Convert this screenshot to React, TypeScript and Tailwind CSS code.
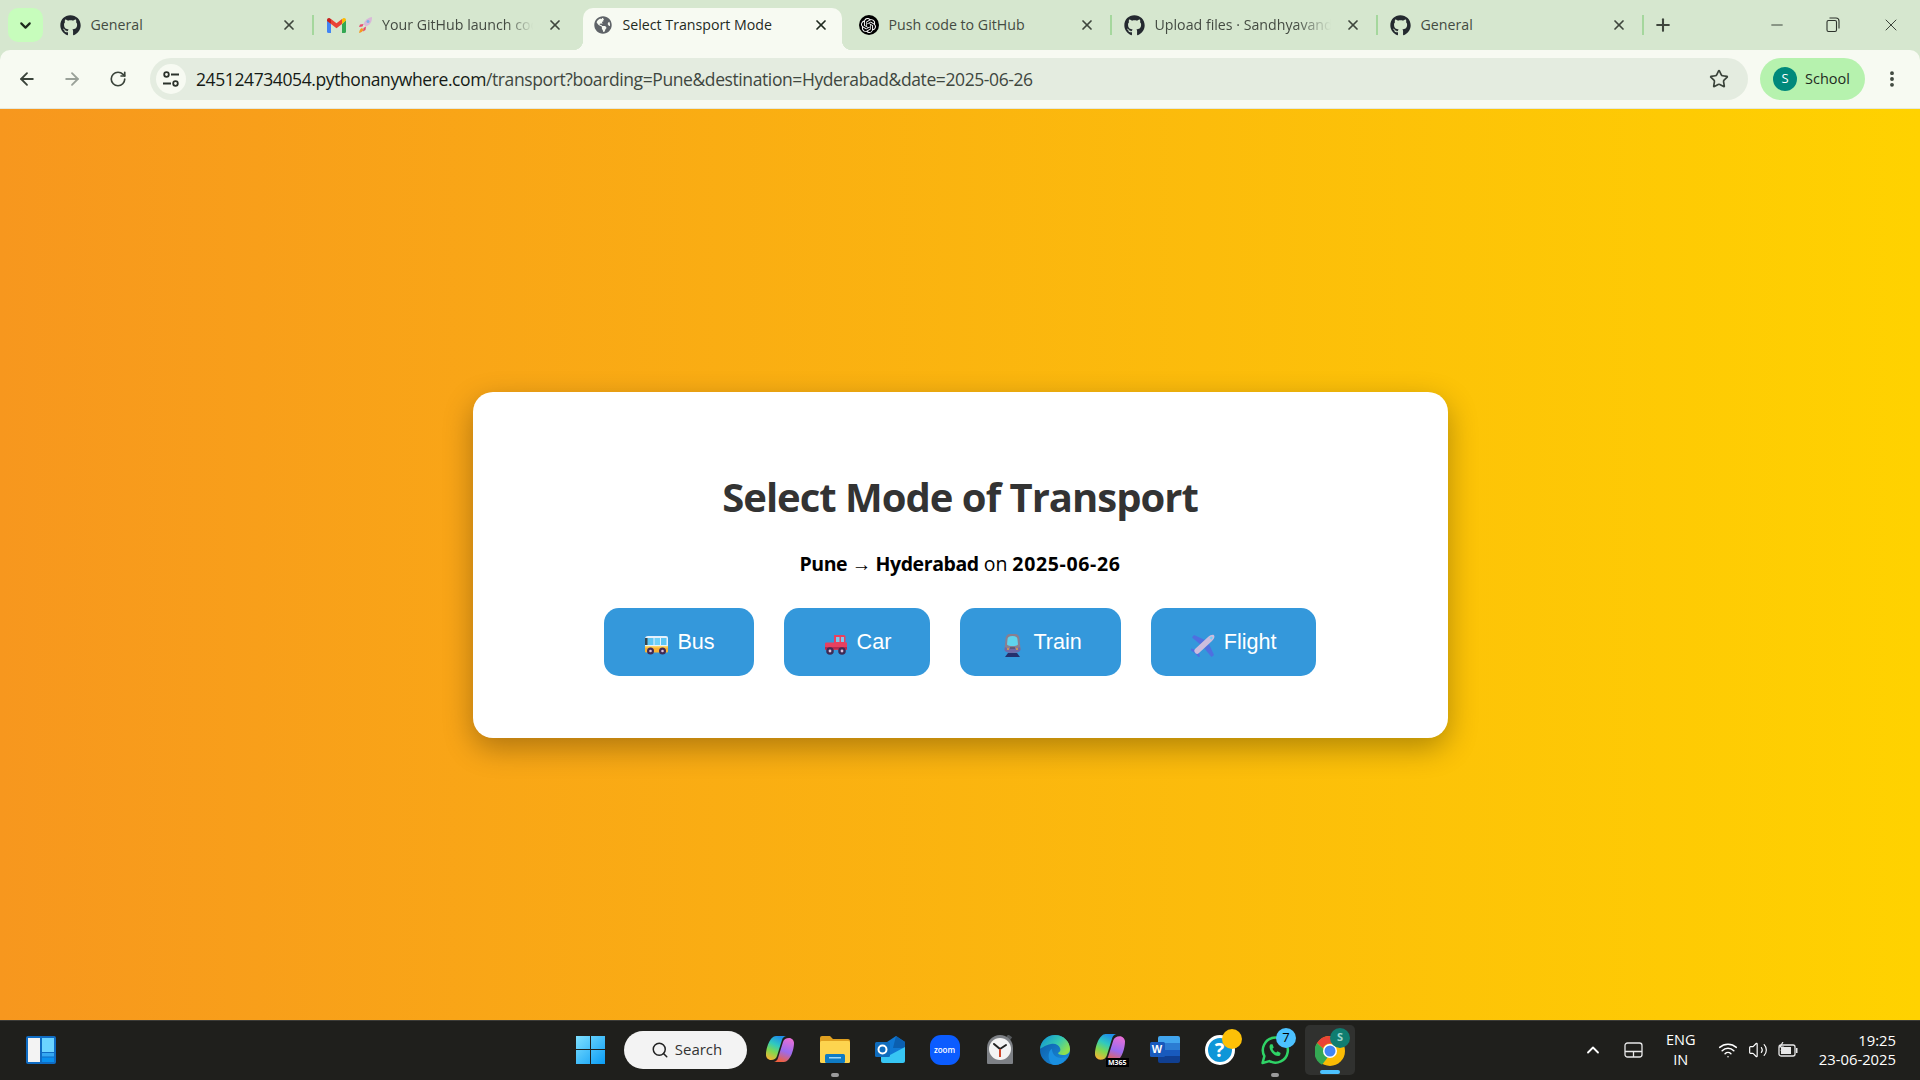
import { ArrowLeft, ArrowRight, ChevronDown, ChevronUp, EllipsisVertical, Minus, Plus, RotateCw, Search, Star, Volume2, Wifi, X } from "lucide-react"
import { FaGithub, FaGlobeAmericas } from "react-icons/fa"
import { SiOpenai } from "react-icons/si"
import type { ReactNode } from "react"

function GmailIcon() {
  return (
    <svg width="19" height="15" viewBox="0 0 19 15">
      <path d="M0 2v11.5A1.5 1.5 0 0 0 1.5 15H4V6z" fill="#4285f4" />
      <path d="M15 6v9h2.5a1.5 1.5 0 0 0 1.5-1.5V2z" fill="#34a853" />
      <path d="M15 1v5l4-3.500V2c0-1.700-2-2.500-3-1.500z" fill="#fbbc04" />
      <path d="M4 6V1l5.500 4.200L15 1v5l-5.500 4.200z" fill="#ea4335" />
      <path d="M0 2v1l4 3V1L3 .5C2 -.5 0 .3 0 2z" fill="#c5221f" />
    </svg>
  )
}

function RocketIcon() {
  return (
    <svg width="15" height="18" viewBox="0 0 15 18">
      <path d="M14 1c-4 .5-7 3-8.500 7l2.500 2.500c4-1.500 6-4.500 6-9.500z" fill="#d9b8d8" />
      <circle cx="10" cy="5.500" r="1.500" fill="#7fb0e8" />
      <path d="M5.500 8 2 8.500 1 11l3.500-.5zM8 10.500 7.500 14 5 15.500l.5-3.500z" fill="#e8486f" />
      <path d="M4 12c-1.500.5-2.500 2-3 5 2.500-.5 4-1.500 4.500-3.500z" fill="#f59a23" />
    </svg>
  )
}

function Tab({ icon, title, active, fade, sep }: { icon: ReactNode; title: string; active?: boolean; fade?: boolean; sep?: boolean }) {
  return (
    <div className="relative flex h-[50px] w-[266px] shrink-0 items-center">
      {active && (
        <div className="absolute left-[3px] top-[8px] h-[42px] w-[259px] rounded-t-[10px] bg-[#f7faf2]">
          <div className="absolute bottom-0 left-[-10px] h-[10px] w-[10px] bg-[radial-gradient(circle_at_0_0,transparent_10px,#f7faf2_10.5px)]" />
          <div className="absolute bottom-0 right-[-10px] h-[10px] w-[10px] bg-[radial-gradient(circle_at_100%_0,transparent_10px,#f7faf2_10.5px)]" />
        </div>
      )}
      <div className="relative ml-[12.500px] flex h-[20px] w-[20px] items-center justify-center">{icon}</div>
      <div
        className={`relative ml-[10px] w-[176px] whitespace-nowrap text-[14.2px] ${active ? "text-[#1f2a1f]" : "text-[#444b42]"} ${fade ? "overflow-hidden [mask-image:linear-gradient(to_right,black_80%,transparent)]" : ""}`}
      >
        {title}
      </div>
      <X className={`absolute left-[233px] top-[17px] ${active ? "text-[#1f2a1f]" : "text-[#3f463d]"}`} size={16} strokeWidth={2.6} />
      {sep && <div className="absolute right-0 top-[15px] h-[20px] w-[2px] bg-[#a5d79d]" />}
    </div>
  )
}

function TabStrip() {
  const gh = <FaGithub size={21} className="shrink-0 text-[#24292f]" />
  return (
    <div className="flex h-[50px] items-start bg-[#d6e7cf]">
      <div className="ml-[8px] mr-[5px] mt-[8px] flex h-[34px] w-[35px] items-center justify-center rounded-[10px] bg-[#c7fdbc]">
        <ChevronDown size={17} strokeWidth={3} className="text-[#1c2a1c]" />
      </div>
      <Tab icon={gh} title="General" sep />
      <div className="relative flex h-[50px] w-[266px] shrink-0 items-center">
        <div className="ml-[13px]"><GmailIcon /></div>
        <div className="ml-[12px]"><RocketIcon /></div>
        <div className="ml-[9px] w-[151px] overflow-hidden whitespace-nowrap text-[14.2px] text-[#444b42] [mask-image:linear-gradient(to_right,black_82%,transparent)]">
          Your GitHub launch code
        </div>
        <X className="absolute left-[233px] top-[17px] text-[#3f463d]" size={16} strokeWidth={2.6} />
      </div>
      <Tab active icon={<FaGlobeAmericas size={18} className="text-[#5f6368]" />} title="Select Transport Mode" />
      <Tab
        icon={
          <div className="flex h-[20px] w-[20px] items-center justify-center rounded-full bg-black">
            <SiOpenai size={15} className="text-white" />
          </div>
        }
        title="Push code to GitHub"
        sep
      />
      <Tab icon={gh} title="Upload files · Sandhyavandana" fade sep />
      <Tab icon={gh} title="General" sep />
      <Plus size={20} strokeWidth={2.5} className="ml-[9px] mt-[15px] text-[#3f463d]" />
      <div className="ml-auto flex h-[50px]">
        <div className="flex w-[54px] items-center justify-center pb-[1px]"><Minus size={18} strokeWidth={1.2} className="text-[#2d332c]" /></div>
        <div className="flex w-[58px] items-center justify-center">
          <svg width="14" height="16" viewBox="0 0 14 16" fill="none" stroke="#2d332c" strokeWidth="1.1">
            <rect x="1" y="3.500" width="9.500" height="11" rx="1.500" />
            <path d="M3.500 1h6.500a3 3 0 0 1 3 3v7.500" />
          </svg>
        </div>
        <div className="flex w-[58px] items-center justify-center"><X size={20} strokeWidth={1.1} className="text-[#2d332c]" /></div>
      </div>
    </div>
  )
}

function TuneIcon() {
  return (
    <svg width="18" height="18" viewBox="0 0 18 18" fill="none" stroke="#2c332c" strokeWidth="1.800">
      <circle cx="4.500" cy="4.500" r="2.300" />
      <path d="M9 4.500h8M1 13.500h8" />
      <circle cx="13.500" cy="13.500" r="2.300" />
    </svg>
  )
}

function Toolbar() {
  return (
    <div className="bg-[#d6e7cf]">
      <div className="flex h-[59px] items-center rounded-t-[10px] border-b border-[#e3e8df] bg-[#f7faf2]">
        <div className="flex w-[150px] items-center pl-[17px]">
          <ArrowLeft size={20} strokeWidth={2.2} className="text-[#3a433a]" />
          <ArrowRight size={20} strokeWidth={2.2} className="ml-[25px] text-[#9aa199]" />
          <RotateCw size={18} strokeWidth={2.2} className="ml-[27px] text-[#3a433a]" />
        </div>
        <div className="flex h-[42px] w-[1598px] items-center rounded-full bg-[#e4ece0] pl-[6px] pr-[19px]">
          <div className="flex h-[30px] w-[30px] items-center justify-center rounded-full bg-[#f7faf2]"><TuneIcon /></div>
          <div className="ml-[10px] whitespace-nowrap text-[17.500px] tracking-[-0.4px] text-[#3f473f]">
            <span className="text-[#151a15]">245124734054.pythonanywhere.com</span>/transport?boarding=Pune&amp;destination=Hyderabad&amp;date=2025-06-26
          </div>
          <Star size={20} strokeWidth={2} className="ml-auto text-[#3a433a]" />
        </div>
        <div className="ml-[12px] flex h-[42px] w-[105px] items-center rounded-full bg-[#b6f2ae] pl-[13px]">
          <div className="flex h-[24px] w-[24px] items-center justify-center rounded-full bg-[#00897b] text-[13px] text-white">S</div>
          <span className="ml-[8px] text-[14.500px] text-[#1f2a1f]">School</span>
        </div>
        <EllipsisVertical size={20} strokeWidth={2.6} className="ml-[17px] text-[#3a433a]" />
      </div>
    </div>
  )
}

function BusEmoji() {
  return (
    <svg width="23" height="19" viewBox="0 0 23 19">
      <path d="M3 0h18a2 2 0 0 1 2 2v13H0V3a3 3 0 0 1 3-3z" fill="#e6f1fb" />
      <rect x="2" y="2" width="6.500" height="7" fill="#5cc6f5" />
      <rect x="9.500" y="2" width="5.500" height="7" fill="#6fd0f8" />
      <rect x="16" y="2" width="5.500" height="7" fill="#5cc6f5" />
      <rect x="0" y="2" width="2.500" height="7" fill="#37474f" />
      <rect x="0" y="10" width="23" height="6.500" rx="1" fill="#f9b233" />
      <rect x="0" y="10" width="23" height="1.500" fill="#fcd667" />
      <circle cx="5.500" cy="15" r="3.500" fill="#3f2a55" />
      <circle cx="17.500" cy="15" r="3.500" fill="#3f2a55" />
      <circle cx="5.500" cy="15" r="1.300" fill="#d9c3dc" />
      <circle cx="17.500" cy="15" r="1.300" fill="#d9c3dc" />
    </svg>
  )
}

function CarEmoji() {
  return (
    <svg width="24" height="22" viewBox="0 0 24 22">
      <path d="M10 1h10a1.500 1.500 0 0 1 1.500 1.500V10H10z" fill="#e8405f" />
      <rect x="12" y="3" width="3.500" height="5" fill="#7cc8ee" />
      <rect x="17" y="3" width="3" height="5" fill="#7cc8ee" />
      <path d="M2 8.500h21V16H1v-6a1.500 1.500 0 0 1 1-1.500z" fill="#e8405f" />
      <rect x="1" y="13" width="22" height="2.500" fill="#b72a4c" />
      <circle cx="6" cy="17" r="3.800" fill="#3f2a55" />
      <circle cx="18" cy="17" r="3.800" fill="#3f2a55" />
      <circle cx="6" cy="17" r="1.400" fill="#d9c3dc" />
      <circle cx="18" cy="17" r="1.400" fill="#d9c3dc" />
    </svg>
  )
}

function TrainEmoji() {
  return (
    <svg width="17" height="23" viewBox="0 0 17 23">
      <path d="M1.500 5c0-3 2-5 4-5h6c2 0 4 2 4 5l1 10c0 2-3 3.500-8 3.500S.5 17 .5 15z" fill="#8a7f90" />
      <path d="M3.500 5.500c0-2 1.500-3.500 5-3.500s5 1.500 5 3.500l.5 5c-1.500 2-9.500 2-11 0z" fill="#5fd4ee" />
      <path d="M1 13c2 2 13 2 15 0l.5 2.500c0 2-3.500 3.500-8 3.500s-8-1.500-8-3.500z" fill="#6f6aa8" />
      <circle cx="4" cy="15" r="1" fill="#e7a33c" />
      <circle cx="13" cy="15" r="1" fill="#e7a33c" />
      <rect x="6" y="13.500" width="5" height="1" fill="#3f3a60" />
      <path d="M4 19h9l3 4H1z" fill="#24306e" />
    </svg>
  )
}

function PlaneEmoji() {
  return (
    <svg width="24" height="23" viewBox="0 0 24 23">
      <path d="M14 6 3 1 1 3.500 10 11zM18 10l5 11-2.500 2L13 14z" fill="#4f6fe0" />
      <path d="M6 16 0 14.500v2l4.500 3 3 3.500 1.500-.5-1.500-4.500z" fill="#4f6fe0" />
      <path d="M4 15 17 3c2.500-2.300 5-2.800 6-1.800s.4 3.500-2 5.800L8 19c-1.500 1.500-2.500 1.200-3.500.2S2.500 16.500 4 15z" fill="#cdbcdd" />
      <path d="M18.500 3.800l2.300-1.300 1 1-1.300 2.300z" fill="#6fd0f8" />
    </svg>
  )
}

function ModeButton({ icon, label }: { icon: ReactNode; label: string }) {
  return (
    <button className="flex h-[68px] items-center rounded-[15px] bg-[#3498db] pl-[40px] pr-[39px] font-['Liberation_Sans',sans-serif] text-[21.600px] text-white">
      <span className="mr-[9px] mt-[6px] flex w-[24px] justify-center">{icon}</span>
      {label}
    </button>
  )
}

function Card() {
  return (
    <div className="flex h-[346px] w-[975px] flex-col items-center rounded-[20px] bg-white pt-[77px] shadow-[0_10px_30px_rgba(0,0,0,0.3)]">
      <h1 className="text-[40px] font-bold leading-[56px] tracking-[-1px] text-[#333333]">Select Mode of Transport</h1>
      <p className="mt-[26px] text-[19.500px] leading-[26px] tracking-[-0.05px] text-black">
        <b className="tracking-[-0.42px]">Pune → Hyderabad</b> on <b className="tracking-[0.65px]">2025-06-26</b>
      </p>
      <div className="mt-[31px] flex gap-[30px]">
        <ModeButton icon={<BusEmoji />} label="Bus" />
        <ModeButton icon={<CarEmoji />} label="Car" />
        <ModeButton icon={<TrainEmoji />} label="Train" />
        <ModeButton icon={<PlaneEmoji />} label="Flight" />
      </div>
    </div>
  )
}

function TaskIcon({ children }: { children: ReactNode }) {
  return <div className="relative flex h-[59px] w-[55px] shrink-0 items-center justify-center">{children}</div>
}

function Dot() {
  return <div className="absolute bottom-[2px] left-[23.500px] h-[4px] w-[8px] rounded-full bg-[#9b9b9b]" />
}

// ribbon logo shared by Copilot and M365
function Ribbon({ id, size }: { id: string; size: number }) {
  return (
    <svg width={size} height={size * 0.93} viewBox="0 0 28 26">
      <defs>
        <linearGradient id={`${id}a`} x1="0.6" y1="0" x2="0.2" y2="1">
          <stop offset="0" stopColor="#1f8fe8" />
          <stop offset="0.35" stopColor="#2fc9c0" />
          <stop offset="0.65" stopColor="#7fd84f" />
          <stop offset="1" stopColor="#f9b233" />
        </linearGradient>
        <linearGradient id={`${id}b`} x1="0.7" y1="0" x2="0.4" y2="1">
          <stop offset="0" stopColor="#e86fd6" />
          <stop offset="0.55" stopColor="#9a6cf0" />
          <stop offset="1" stopColor="#f0603f" />
        </linearGradient>
      </defs>
      <path d="M10 0h10c-2 .5-3.500 2-4 4l-5 16c-.7 2.500-3 4-6 4-3 0-5-2.500-5-5C0 12 4 0 10 0z" fill={`url(#${id}a)`} />
      <path d="M18 26H8c2-.5 3.500-2 4-4l5-16c.7-2.500 3-4 6-4 3 0 5 2.500 5 5 0 7-4 19-10 19z" fill={`url(#${id}b)`} />
    </svg>
  )
}

function Taskbar() {
  return (
    <div className="flex h-[60px] items-center border-t border-[#3b3b38] bg-[#1f1f1c] pb-[2px] font-['Open_Sans',sans-serif] text-white">
      <svg className="ml-[26px]" width="30" height="28" viewBox="0 0 30 28">
        <rect width="30" height="28" rx="2" fill="#0f6cc4" />
        <rect x="2" y="2" width="12" height="24" fill="#f3f3f3" />
        <rect x="16" y="2" width="12" height="14" fill="#6bd3ff" />
        <rect x="16" y="17" width="12" height="3.500" fill="#35a8f2" />
        <rect x="16" y="21.500" width="12" height="4.500" fill="#0a90ee" />
      </svg>
      <svg className="ml-[520px]" width="29" height="29" viewBox="0 0 29 29">
        <defs>
          <linearGradient id="win" x1="0" y1="0" x2="1" y2="1">
            <stop offset="0" stopColor="#7fe0ff" />
            <stop offset="1" stopColor="#0a9cf5" />
          </linearGradient>
        </defs>
        <path d="M0 1h14v13H0zM15 1h14v13H15zM0 15h14v14H0zM15 15h14v14H15z" fill="url(#win)" />
      </svg>
      <div className="ml-[19px] mr-[5px] flex h-[38px] w-[123px] items-center justify-center rounded-full bg-[#f3f3f3] pl-[2px] text-[15px] text-[#333333]">
        <Search size={18} strokeWidth={2} className="mr-[6px] text-[#222222]" />
        Search
      </div>
      <TaskIcon>
        <Ribbon id="cop" size={28} />
      </TaskIcon>
      <TaskIcon>
        <svg width="30" height="27" viewBox="0 0 30 27">
          <path d="M0 2a2 2 0 0 1 2-2h8l3 3h15a2 2 0 0 1 2 2v3H0z" fill="#e0a020" />
          <rect y="5" width="30" height="22" rx="1.500" fill="#fdd44f" />
          <rect x="5" y="18" width="20" height="9" rx="1.500" fill="#0f7bc4" />
          <rect x="9" y="21" width="12" height="1.500" fill="#9fd8f8" />
        </svg>
        <Dot />
      </TaskIcon>
      <TaskIcon>
        <svg width="30" height="27" viewBox="0 0 30 27">
          <path d="M9 8 21 0l9 6v18a2 2 0 0 1-2 2H12z" fill="#0f78d4" />
          <path d="M21 0l9 6v6H18z" fill="#0b5fb0" />
          <path d="M6 14l9 5 15-8v14a2 2 0 0 1-2 2H8a2 2 0 0 1-2-2z" fill="#37c6f4" />
          <rect y="6" width="15" height="15" rx="1.500" fill="#0f6cbd" />
          <circle cx="7.500" cy="13.500" r="4" fill="none" stroke="#ffffff" strokeWidth="2" />
        </svg>
      </TaskIcon>
      <TaskIcon>
        <div className="flex h-[30px] w-[30px] items-center justify-center rounded-[11px] bg-[#0b5cff] text-[8px] font-semibold text-white">zoom</div>
      </TaskIcon>
      <TaskIcon>
        <svg width="30" height="30" viewBox="0 0 30 30">
          <rect x="21" y="0" width="5" height="5" fill="#55585b" transform="rotate(35 23 3)" />
          <path d="M2 13a13 13 0 0 1 26 0v15a1 1 0 0 1-1 1H3a1 1 0 0 1-1-1z" fill="#7d8085" />
          <circle cx="15" cy="14" r="11" fill="#f3f3f3" />
          <path d="M15 14 9 9M15 14 21 10" stroke="#222222" strokeWidth="2" strokeLinecap="round" />
          <path d="M15 14v8" stroke="#d0452a" strokeWidth="2" />
        </svg>
      </TaskIcon>
      <TaskIcon>
        <svg width="30" height="30" viewBox="0 0 30 30">
          <defs>
            <linearGradient id="edge1" x1="0" y1="0" x2="1" y2="0.6">
              <stop offset="0" stopColor="#0c8ed9" />
              <stop offset="0.6" stopColor="#36c9b0" />
              <stop offset="1" stopColor="#8fe04f" />
            </linearGradient>
            <linearGradient id="edge2" x1="0" y1="0" x2="1" y2="1">
              <stop offset="0" stopColor="#0c59a4" />
              <stop offset="1" stopColor="#1a8fe0" />
            </linearGradient>
          </defs>
          <circle cx="15" cy="15" r="15" fill="url(#edge2)" />
          <path d="M0 14C1 5 8 0 15 0c9 0 15 7 15 14 0 4-3 6-7 6-3 0-5-1-5-2 2-1 3-3 2-5-1-3-5-5-9-4-6 1-11 5-11 5z" fill="url(#edge1)" />
          <path d="M12 14c0 5 4 9 9 9 3 0 5-1 6-2-2 6-7 9-12 9 -3 0-5-2-6-6s0-9 3-10z" fill="#1a8fe0" />
        </svg>
      </TaskIcon>
      <TaskIcon>
        <div className="mb-[4px]"><Ribbon id="m365" size={30} /></div>
        <div className="absolute bottom-[12px] left-[24px] bg-black px-[2px] text-[7px] font-bold leading-[9px] text-white">M365</div>
      </TaskIcon>
      <TaskIcon>
        <div className="relative h-[27px] w-[30px]">
          <div className="absolute right-0 top-0 flex h-full w-[22px] flex-col overflow-hidden rounded-[2px]">
            <div className="flex-1 bg-[#41a5ee]" />
            <div className="flex-1 bg-[#2b7cd3]" />
            <div className="flex-1 bg-[#185abd]" />
            <div className="flex-1 bg-[#103f91]" />
          </div>
          <div className="absolute left-0 top-[6px] flex h-[15px] w-[15px] items-center justify-center rounded-[1.500px] bg-[#185abd] font-['Liberation_Sans',sans-serif] text-[11px] font-bold text-white">W</div>
        </div>
      </TaskIcon>
      <TaskIcon>
        <div className="flex h-[30px] w-[30px] items-center justify-center rounded-full border-[3px] border-white bg-[#0e96d8] text-[20px] font-bold text-white">?</div>
        <div className="absolute left-[30px] top-[9px] h-[20px] w-[20px] rounded-full bg-[#fdc007]" />
      </TaskIcon>
      <TaskIcon>
        <svg width="30" height="31" viewBox="0 0 24 24" className="mt-[2px]" fill="none">
          <path d="M2 22l1.500-5.500A10 10 0 1 1 7.500 20.500z" stroke="#2fd366" strokeWidth="2" strokeLinejoin="round" />
          <path d="M8.500 7c-1.500 1-1 4 1 6.500s5 3.500 6.500 2.500l.5-2-2.500-1.500-1 1c-1.500-.5-2.500-1.500-3-3l1-1L10 7z" fill="#2fd366" />
        </svg>
        <div className="absolute left-[29px] top-[8px] flex h-[20px] w-[20px] items-center justify-center rounded-full bg-[#4cc2ff] text-[13px] text-black">7</div>
        <Dot />
      </TaskIcon>
      <div className="relative ml-[3px] flex h-[50px] w-[50px] shrink-0 items-center justify-center rounded-[5px] bg-[#30312f]">
        <svg width="30" height="30" viewBox="0 0 30 30" className="mt-[3px]">
          <circle cx="15" cy="15" r="15" fill="#fbbc04" />
          <path d="M15 0a15 15 0 0 1 13 7.500H15a7.500 7.500 0 0 0-7 4.800L2 7A15 15 0 0 1 15 0z" fill="#ea4335" />
          <path d="M2 7l6 5.500 5 8.500-6 7.800A15 15 0 0 1 2 7z" fill="#34a853" />
          <circle cx="15" cy="15" r="7" fill="#ffffff" />
          <circle cx="15" cy="15" r="5.500" fill="#4285f4" />
        </svg>
        <div className="absolute left-[25px] top-[3px] flex h-[20px] w-[20px] items-center justify-center rounded-full bg-[#0f7d70] text-[11px] font-bold text-[#9fd6cd]">S</div>
        <div className="absolute bottom-[1px] left-[15px] h-[4px] w-[20px] rounded-full bg-[#4cc2ff]" />
      </div>
      <div className="ml-auto flex items-center pr-[24px]">
        <ChevronUp size={20} strokeWidth={2.200} className="mr-[21px]" />
        <svg width="19" height="16" viewBox="0 0 19 16" fill="none" stroke="#e8e8e8" strokeWidth="1.300" className="mr-[23px]">
          <rect x="1" y="1" width="17" height="14" rx="2.500" />
          <path d="M1 9.500h17M9.500 9.500V15" />
        </svg>
        <div className="mr-[22px] w-[30px] text-center text-[14.5px] leading-[20px]">ENG<br />IN</div>
        <Wifi size={20} strokeWidth={1.800} className="mr-[10px]" />
        <Volume2 size={20} strokeWidth={1.400} className="mr-[10px]" />
        <svg width="20" height="16" viewBox="0 0 20 16" className="mr-[21px]">
          <rect x="1" y="3" width="16" height="11" rx="2" fill="none" stroke="#e8e8e8" strokeWidth="1.300" />
          <rect x="3" y="5" width="10" height="7" fill="#e8e8e8" />
          <rect x="18" y="6" width="1.500" height="5" fill="#e8e8e8" />
          <path d="M5 0 2 5h3L3 9" fill="none" stroke="#e8e8e8" strokeWidth="1.200" />
        </svg>
        <div className="text-right text-[14.800px] leading-[19px]">19:25<br />23-06-2025</div>
      </div>
    </div>
  )
}

export default function App() {
  return (
    <div className="flex h-[1080px] w-[1920px] flex-col overflow-hidden font-['Open_Sans',sans-serif]">
      <TabStrip />
      <Toolbar />
      <main className="flex flex-1 items-start justify-center bg-[linear-gradient(to_right,#f7971e,#ffd200)] pt-[283px]">
        <Card />
      </main>
      <Taskbar />
    </div>
  )
}
